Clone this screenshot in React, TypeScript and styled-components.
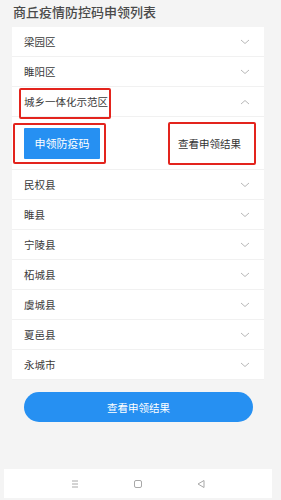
import { createGlobalStyle } from 'styled-components';
import styled from 'styled-components';

const GlobalStyle = createGlobalStyle`
  body {
    margin: 0;
    background: #f4f4f4;
    font-family: 'Noto Sans CJK SC', 'Noto Sans', sans-serif;
  }
`;

const S = {
  Page: styled.div`
    width: 281px;
    height: 500px;
    display: flex;
    flex-direction: column;
    background: #f4f4f4;
    overflow: hidden;
  `,

  Title: styled.h1`
    margin: 0;
    height: 27px;
    padding: 2px 0 0 13px;
    box-sizing: border-box;
    font-size: 13px;
    line-height: 20px;
    font-weight: 500;
    color: #4a4a4a;
  `,

  Card: styled.section`
    margin: 0 17px 0 12px;
    background: #fff;
    display: flex;
    flex-direction: column;
  `,

  Row: styled.div`
    position: relative;
    height: 30px;
    box-sizing: border-box;
    padding: 0 14px 0 12px;
    display: flex;
    align-items: center;
    justify-content: space-between;
    border-bottom: 1px solid #f1f1f1;
    font-size: 10.5px;
    color: #3a3a3a;
  `,

  Panel: styled.div`
    position: relative;
    height: 53px;
    box-sizing: border-box;
    padding: 0 23px 0 12px;
    display: flex;
    align-items: center;
    justify-content: space-between;
    border-bottom: 1px solid #f1f1f1;
  `,

  ApplyButton: styled.button`
    width: 76px;
    height: 31px;
    border: none;
    border-radius: 1px;
    background: #2690f2;
    color: #fff;
    font-family: inherit;
    font-size: 11px;
  `,

  ResultLink: styled.span`
    font-size: 10.5px;
    color: #333;
  `,

  Mark: styled.div<{ $l: number; $t: number; $w: number; $h: number }>`
    position: absolute;
    left: ${({ $l }) => $l}px;
    top: ${({ $t }) => $t}px;
    width: ${({ $w }) => $w}px;
    height: ${({ $h }) => $h}px;
    box-sizing: border-box;
    border: 2px solid #e3241d;
    border-radius: 2px;
    pointer-events: none;
    z-index: 2;
  `,

  BigButton: styled.button`
    margin: 12px 0 0 24px;
    width: 229px;
    height: 30px;
    border: none;
    border-radius: 15px;
    background: #2690f2;
    color: #fff;
    font-family: inherit;
    font-size: 10.5px;
  `,

  NavBar: styled.nav`
    margin: auto 9px 2px 4px;
    height: 29px;
    background: #fff;
    display: flex;
    align-items: center;
    justify-content: center;
    gap: 53px;
  `,
};

const Chevron = ({ up }: { up?: boolean }) => (
  <svg width='10' height='6' viewBox='0 0 10 6'>
    <path
      d={up ? 'M1 5 L5 1.5 L9 5' : 'M1 1 L5 4.5 L9 1'}
      fill='none'
      stroke='#b8b8b8'
      strokeWidth='1'
    />
  </svg>
);

const MenuIcon = () => (
  <svg width='10' height='10' viewBox='0 0 10 10'>
    <path d='M2 2 H8 M2 5 H8 M2 8 H8' stroke='#a8a8a8' strokeWidth='1' />
  </svg>
);

const HomeIcon = () => (
  <svg width='10' height='10' viewBox='0 0 10 10'>
    <rect x='1.5' y='1.5' width='7' height='7' rx='1.5' fill='none' stroke='#a8a8a8' strokeWidth='1' />
  </svg>
);

const BackIcon = () => (
  <svg width='10' height='10' viewBox='0 0 10 10'>
    <path d='M8 1.5 L2 5 L8 8.5 Z' fill='none' stroke='#a8a8a8' strokeWidth='1' strokeLinejoin='round' />
  </svg>
);

const topAreas = ['梁园区', '睢阳区'];
const restAreas = ['民权县', '睢县', '宁陵县', '柘城县', '虞城县', '夏邑县', '永城市'];

const App = () => (
  <>
    <GlobalStyle />
    <S.Page>
      <S.Title>商丘疫情防控码申领列表</S.Title>
      <S.Card>
        {topAreas.map((name) => (
          <S.Row key={name}>
            {name}
            <Chevron />
          </S.Row>
        ))}
        <S.Row>
          城乡一体化示范区
          <Chevron up />
          <S.Mark $l={7} $t={1} $w={92} $h={31} />
        </S.Row>
        <S.Panel>
          <S.ApplyButton>申领防疫码</S.ApplyButton>
          <S.ResultLink>查看申领结果</S.ResultLink>
          <S.Mark $l={1} $t={6} $w={93} $h={41} />
          <S.Mark $l={156} $t={5} $w={88} $h={43} />
        </S.Panel>
        {restAreas.map((name) => (
          <S.Row key={name}>
            {name}
            <Chevron />
          </S.Row>
        ))}
      </S.Card>
      <S.BigButton>查看申领结果</S.BigButton>
      <S.NavBar>
        <MenuIcon />
        <HomeIcon />
        <BackIcon />
      </S.NavBar>
    </S.Page>
  </>
);

export default App;
